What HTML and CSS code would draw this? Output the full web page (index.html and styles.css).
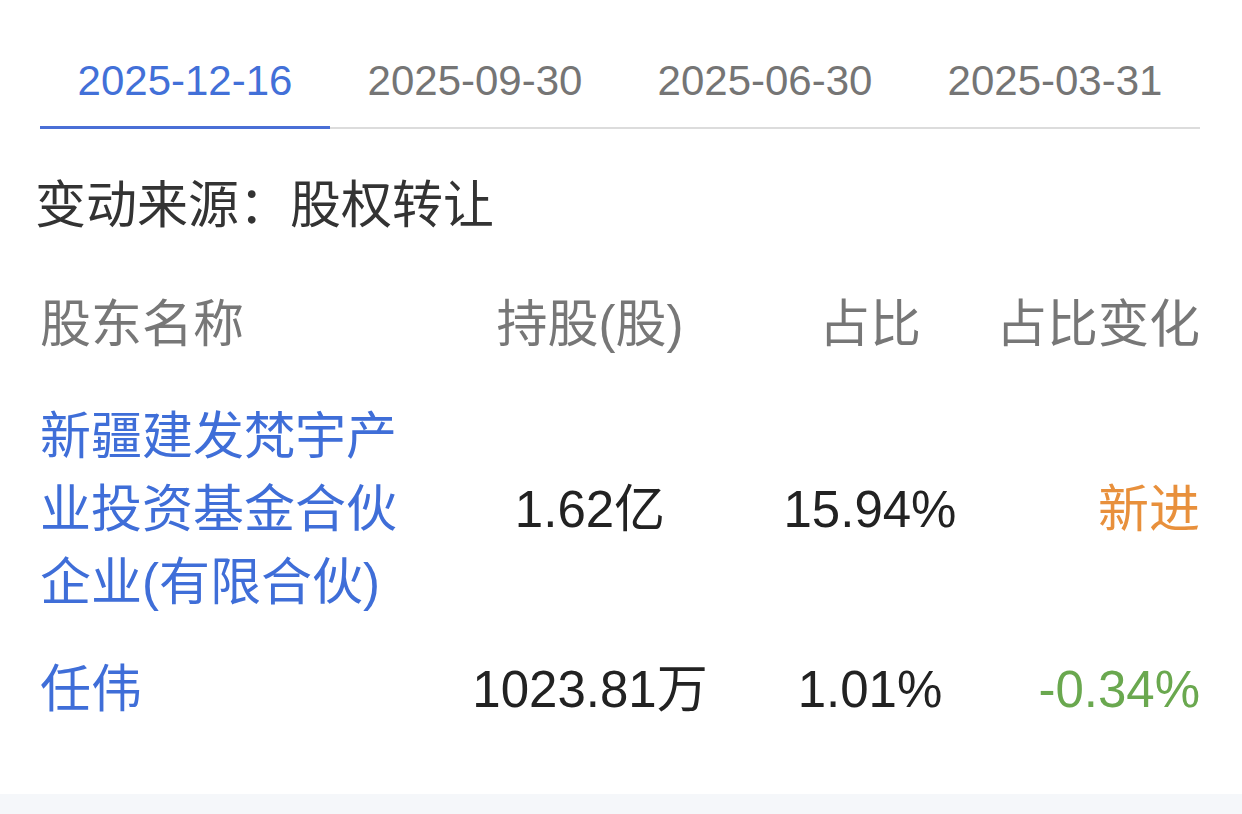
FILE: index.html
```html
<!DOCTYPE html>
<html lang="zh-CN">
<head>
<meta charset="utf-8">
<title>股东变动</title>
<link rel="stylesheet" href="styles.css">
</head>
<body>
<main class="panel">
  <nav class="tabs">
    <div class="tab active">2025-12-16</div>
    <div class="tab">2025-09-30</div>
    <div class="tab">2025-06-30</div>
    <div class="tab">2025-03-31</div>
  </nav>
  <div class="source">变动来源：股权转让</div>
  <div class="table">
    <div class="row head">
      <div class="c name">股东名称</div>
      <div class="c mid">持股(股)</div>
      <div class="c mid">占比</div>
      <div class="c end">占比变化</div>
    </div>
    <div class="row">
      <div class="c name link">新疆建发梵宇产业投资基金合伙企业(有限合伙)</div>
      <div class="c mid">1.62亿</div>
      <div class="c mid">15.94%</div>
      <div class="c end up">新进</div>
    </div>
    <div class="row">
      <div class="c name link">任伟</div>
      <div class="c mid">1023.81万</div>
      <div class="c mid">1.01%</div>
      <div class="c end down">-0.34%</div>
    </div>
  </div>
</main>
<div class="footer-band"></div>
</body>
</html>
```

FILE: styles.css
```css
html, body {
  margin: 0;
  padding: 0;
  background: #ffffff;
}
body {
  font-family: "Liberation Sans", "Noto Sans CJK SC", sans-serif;
  width: 1242px;
  height: 814px;
  overflow: hidden;
}
.panel {
  padding: 0 42px 51px 40px;
}
.tabs {
  display: grid;
  grid-template-columns: repeat(4, 1fr);
  border-bottom: 2px solid #dcdcdc;
}
.tab {
  padding: 56px 0 20px;
  margin-bottom: -2px;
  line-height: 50px;
  font-size: 42px;
  text-align: center;
  color: #757575;
  border-bottom: 3px solid transparent;
}
.tab.active {
  color: #4270d8;
  border-bottom-color: #4a6fd6;
}
.source {
  margin-top: 42px;
  margin-left: -5px;
  font-size: 51px;
  line-height: 70px;
  color: #333333;
}
.table {
  margin-top: 49px;
}
.row {
  display: grid;
  grid-template-columns: 370px 360px 200px 230px;
  align-items: center;
  padding: 17px 0;
  font-size: 51px;
  line-height: 73px;
  color: #222222;
}
.row.head {
  padding: 0 0 23px;
  line-height: 70px;
  color: #777777;
}
.c.mid {
  text-align: center;
}
.c.end {
  text-align: right;
}
.link {
  color: #3f6ed8;
}
.up {
  color: #e8903c;
}
.down {
  color: #6aa84f;
}
.footer-band {
  height: 20px;
  background: #f5f7fa;
}
```
